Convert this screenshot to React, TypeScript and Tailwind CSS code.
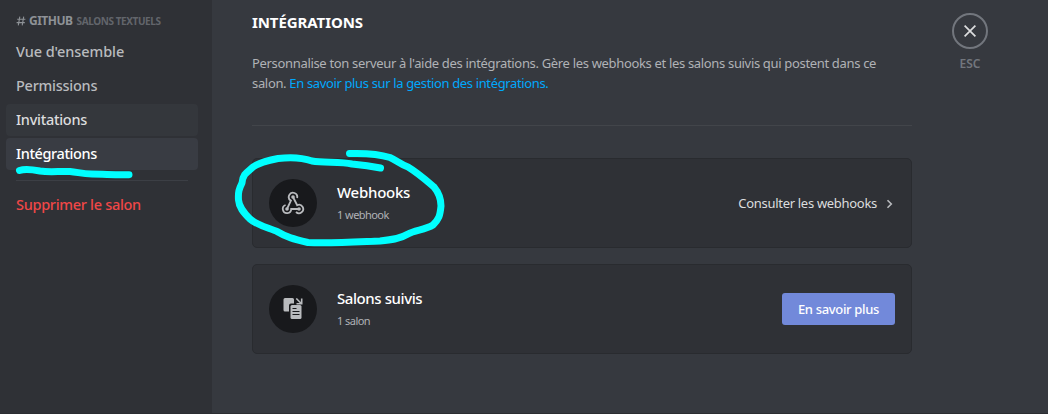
import type { ReactNode } from "react";

function NavItem({ className, children }: { className: string; children: ReactNode }) {
  return (
    <a className={`flex h-8 items-center rounded px-2.5 text-[14.5px] font-medium ${className}`}>
      {children}
    </a>
  );
}

function Sidebar() {
  return (
    <nav className="relative w-[212px] shrink-0 bg-[#2f3136] pt-2 pl-1.5">
      <div className="flex w-48 flex-col gap-0.5">
        <h2 className="flex h-[26px] items-center pl-2.5 whitespace-nowrap">
          <svg className="mr-[3px]" width="10" height="10" viewBox="0 0 10 10" fill="none" stroke="#8e9297" strokeWidth="1.100">
            <path d="M3.800 .6 2.300 9.400M7.700 .6 6.200 9.400M1.200 3.300h8.200M.6 6.600h8.200" />
          </svg>
          <span className="text-[12px] font-bold tracking-[-0.5px] text-[#8e9297]">GITHUB</span>
          <span className="ml-[4px] pt-px text-[10px] font-bold tracking-[-0.4px] text-[#62656b]">SALONS TEXTUELS</span>
        </h2>
        <NavItem className="tracking-[-0.08px] text-[#b9bbbe]">Vue d'ensemble</NavItem>
        <NavItem className="tracking-[-0.25px] text-[#b9bbbe]">Permissions</NavItem>
        <NavItem className="bg-[#34373c] tracking-[-0.28px] text-[#dcddde]">Invitations</NavItem>
        <NavItem className="bg-[#393c43] tracking-[-0.4px] text-white">Intégrations</NavItem>
        <div className="mx-2.5 mt-2 mb-1.5 h-px bg-[#3c3f45]" />
        <NavItem className="tracking-[-0.3px] text-[#f04747]">Supprimer le salon</NavItem>
      </div>
      <svg className="absolute top-[160px] left-[10px]" width="130" height="24" viewBox="10 160 130 24" fill="none" stroke="#00ffff" strokeWidth="7" strokeLinecap="round" strokeLinejoin="round">
        <path d="M19.500 170.500C25 168.500 32 169.500 40 171C50 172.500 60 171 70 171.500C78 172.200 82 173.800 92 174C105 174 115 175.200 129 174.700" />
      </svg>
    </nav>
  );
}

function WebhookIcon() {
  return (
    <svg width="24" height="24" viewBox="0 0 24 24" fill="none" stroke="#b9bbbe" strokeWidth="1.800">
      <path d="M16.100 7A4.200 4.200 0 1 0 9.900 9.600L6 18" />
      <path d="M12 6 16.200 14.200A4.200 4.200 0 1 1 15 21" />
      <path d="M18 18H10.200A4.200 4.200 0 1 1 4.600 14" />
      <g fill="#b9bbbe" stroke="none">
        <circle cx="12" cy="6" r="1.800" />
        <circle cx="6" cy="18" r="1.800" />
        <circle cx="18" cy="18" r="1.800" />
      </g>
    </svg>
  );
}

function FollowedIcon() {
  return (
    <svg width="20" height="22" viewBox="0 0 20 22" fill="none">
      <path fill="#b9bbbe" d="M2 0H9.500A1.500 1.500 0 0 1 11 1.500V5.500H8Q6 5.500 6 7.500V13.500H2A1.500 1.500 0 0 1 .5 12V1.500A1.500 1.500 0 0 1 2 0Z" />
      <rect x="7.500" y="7" width="11" height="14" rx="1.500" fill="#b9bbbe" />
      <path d="M9.500 10.500h4M9.500 13.500h7M9.500 16.500h7" stroke="#18191c" strokeWidth="1.100" />
      <path d="M13.300 .5 18 5.200M18.700 .5v5.200h-5.200" stroke="#b9bbbe" strokeWidth="1.600" />
    </svg>
  );
}

function Card({ icon, title, detail, children }: { icon: ReactNode; title: ReactNode; detail: string; children: ReactNode }) {
  return (
    <section className="flex h-[90px] w-[660px] items-center rounded-[5px] border border-[#292b2f] bg-[#2f3136] px-4">
      <div className="flex size-12 items-center justify-center rounded-full bg-[#18191c]">{icon}</div>
      <div className="ml-5 flex-1">
        <h3 className="text-[15px] leading-5 font-medium text-white">{title}</h3>
        <p className="mt-[5px] mb-px text-[11px] leading-4 tracking-[-0.55px] text-[#b0b2b6]">{detail}</p>
      </div>
      {children}
    </section>
  );
}

export default function App() {
  return (
    <div className="flex h-[414px] w-[1048px] overflow-hidden border-b border-[#2b2d31] bg-[#36393f] font-['Noto_Sans',sans-serif]">
      <Sidebar />
      <main className="relative w-[700px] shrink-0 pt-3 pl-10">
        <h1 className="text-[15px] leading-5 font-bold tracking-[-0.08px] text-white">INTÉGRATIONS</h1>
        <p className="mt-[21px] text-[13px] leading-5 tracking-[-0.33px] whitespace-nowrap text-[#b0b2b6]">
          Personnalise ton serveur à l'aide des intégrations. Gère les webhooks et les salons suivis qui postent dans ce
          <br />
          salon. <a className="tracking-[-0.36px] text-[#00a8fc]">En savoir plus sur la gestion des intégrations.</a>
        </p>
        <div className="mt-8 h-px w-[660px] bg-[#42454a]" />
        <div className="mt-8 flex flex-col gap-4">
          <Card icon={<WebhookIcon />} title={<span className="tracking-[-0.25px]">Webhooks</span>} detail="1 webhook">
            <a className="flex items-center pt-px text-[13px] tracking-[-0.3px] text-[#dcddde]">
              Consulter les webhooks
              <svg className="mr-px ml-[9px]" width="8" height="10" viewBox="0 0 8 10" fill="none" stroke="#b9bbbe" strokeWidth="1.600">
                <path d="M1.500 1.200 5.300 5 1.500 8.800" />
              </svg>
            </a>
          </Card>
          <Card icon={<FollowedIcon />} title={<span className="tracking-[-0.42px]">Salons suivis</span>} detail="1 salon">
            <button className="h-8 w-[113px] rounded-[3px] bg-[#7289da] pt-0.5 text-[13px] font-medium tracking-[-0.33px] text-white">
              En savoir plus
            </button>
          </Card>
        </div>
        <svg className="absolute top-[140px] left-[18px]" width="220" height="115" viewBox="230 140 220 115" fill="none" stroke="#00ffff" strokeWidth="7" strokeLinecap="round" strokeLinejoin="round">
          <path d="M349.500 153.500C365 153 379 154 390 157.500C396 160 400 164 408 167C418 173 427 181 434 187C439 193 441 198 441 206C440 216 439 219 433 225C425 230 415 230 408 234C400 239 390 240 380 241C355 242 330 243.500 308 242.500C294 239 286 237 278 232C270 228 258 226 250 219C243 212 239 207 238.500 200C238 192 239 189 242 183C243 173 248 172 253 167C260 162 270 160 278 158.500C290 157 302 157.500 312 161C324 163 340 161.500 352 164C362 165 370 166 380.500 168" />
        </svg>
      </main>
      <div className="ml-10 flex flex-col items-center pt-[13px]">
        <button className="flex size-9 items-center justify-center rounded-full border-2 border-[#72767d]">
          <svg width="12" height="12" viewBox="0 0 12 12" stroke="#dcddde" strokeWidth="1.700">
            <path d="m.6 .6 10.800 10.800M11.400 .6.6 11.400" />
          </svg>
        </button>
        <span className="mt-[7px] text-[12px] leading-4 font-semibold text-[#72767d]">ESC</span>
      </div>
    </div>
  );
}
